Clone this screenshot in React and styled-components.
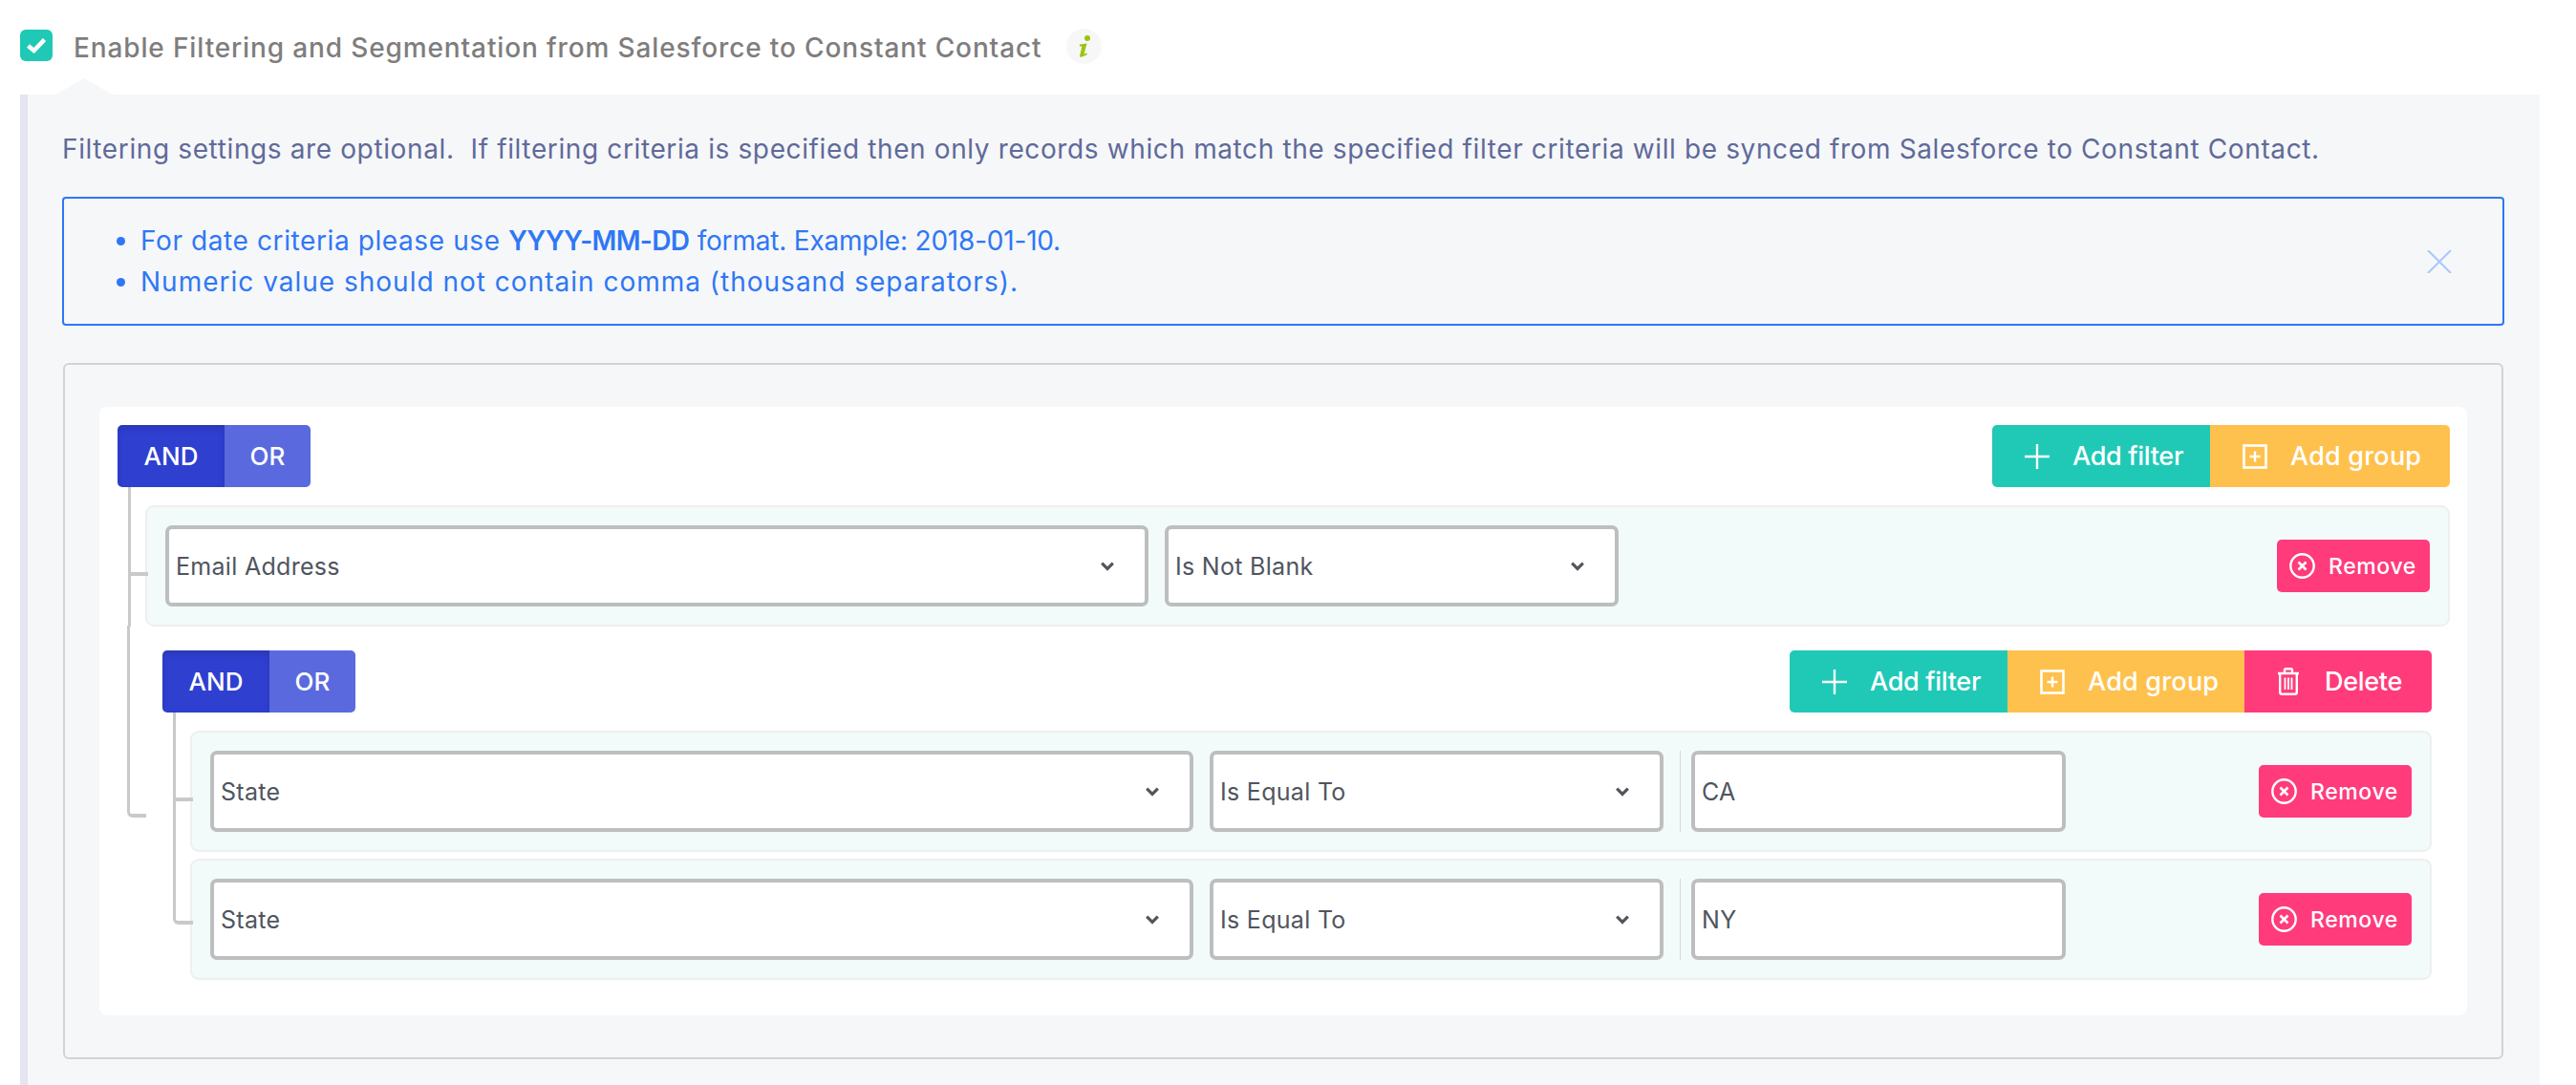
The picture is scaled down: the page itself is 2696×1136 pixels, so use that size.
import React from 'react'
import styled, { createGlobalStyle } from 'styled-components'

const GlobalStyle = createGlobalStyle`
  html, body { margin: 0; padding: 0; background: #fff; }
  body { font-family: Inter, "Noto Sans", sans-serif; }
  * { box-sizing: border-box; }
`
const Page = styled.div`
  width: 2696px;
  height: 1136px;
  overflow: hidden;
  display: flex;
  flex-direction: column;
`
const Heading = styled.div`
  height: 99px;
  padding: 31px 0 0 21px;
  display: flex;
  align-items: flex-start;
`
const Check = styled.span`
  width: 34px;
  height: 33px;
  border-radius: 6px;
  background: #1fc9b6;
  display: flex;
  align-items: center;
  justify-content: center;
`
const Title = styled.span`
  margin-left: 22px;
  height: 38px;
  line-height: 38px;
  font-size: 28px;
  font-weight: 500;
  letter-spacing: 0.87px;
  color: #7f7d7d;
  white-space: nowrap;
`
const Info = styled.span`
  width: 37px;
  height: 37px;
  margin: -1px 0 0 26px;
  border-radius: 50%;
  background: #f7f7f7;
  display: flex;
  align-items: center;
  justify-content: center;
`
const Panel = styled.div`
  position: relative;
  flex: 1;
  width: 2637px;
  margin-left: 21px;
  padding: 36px 37px 0 36px;
  background: #f6f7f9;
  border-left: 8px solid #e3e6f0;
  &::before {
    content: "";
    position: absolute;
    left: 29px;
    top: -17px;
    border-left: 30px solid transparent;
    border-right: 30px solid transparent;
    border-bottom: 17px solid #f6f7f9;
  }
`
const Intro = styled.p`
  margin: 0;
  line-height: 43px;
  font-size: 28px;
  letter-spacing: 0.62px;
  color: #5f6a9a;
  white-space: nowrap;
`
const Alert = styled.div`
  height: 135px;
  margin-top: 28px;
  border: 2px solid #2f77f5;
  border-radius: 4px;
  padding-right: 53px;
  display: flex;
  align-items: center;
  justify-content: space-between;
  color: #2f77f5;
`
const AlertList = styled.ul`
  margin: 0;
  padding: 0 0 0 80px;
  font-size: 28px;
  line-height: 43px;
  white-space: nowrap;
`
const AlertItem = styled.li`
  letter-spacing: ${(p) => p.$spacing}px;
  b { font-weight: 600; letter-spacing: -0.7px; }
`
const AlertTail = styled.span`
  letter-spacing: -0.2px;
`
const BuilderBox = styled.div`
  margin: 39px 1px 0;
  height: 729px;
  border: 2px solid #d0d3d8;
  border-radius: 6px;
  padding: 44px 36px 43px;
`
const RootGroup = styled.div`
  background: #fff;
  border-radius: 8px;
  padding: 19px 18px 37px 19px;
`
const NestedGroup = styled.div`
  position: relative;
  margin-top: 25px;
  padding: 0 19px 0 18px;
  &::before {
    content: "";
    position: absolute;
    left: -19px;
    top: -26px;
    width: 17px;
    height: 197px;
    border-left: 3px solid #c8c9cb;
    border-bottom: 4px solid #c8c9cb;
    border-bottom-left-radius: 6px;
  }
`
const GroupHeader = styled.div`
  height: 65px;
  display: flex;
  justify-content: space-between;
`
const ButtonRow = styled.div`
  display: flex;
  border-radius: 5px;
  overflow: hidden;
`
const ToggleButton = styled.span`
  width: ${(p) => p.$width}px;
  display: flex;
  align-items: center;
  justify-content: center;
  font-size: 26px;
  font-weight: 500;
  color: #fff;
  background: ${(p) => (p.$active ? '#2f3fd0' : '#5a6ade')};
  box-shadow: ${(p) => (p.$active ? 'inset 0 4px 6px rgba(0,0,0,.125)' : 'none')};
`
const ActionButton = styled.span`
  width: ${(p) => p.$width}px;
  padding-left: ${(p) => p.$pad}px;
  display: flex;
  align-items: center;
  gap: ${(p) => p.$gap}px;
  font-size: 27px;
  font-weight: 500;
  letter-spacing: ${(p) => p.$spacing || -0.3}px;
  color: #fff;
  white-space: nowrap;
  background: ${(p) => p.$bg};
`
const Rules = styled.div`
  margin-left: 29px;
`
const Rule = styled.div`
  position: relative;
  height: 127px;
  margin-top: ${(p) => p.$gap}px;
  padding: 19px;
  background: #f2fbfa;
  border: 2px solid #eeeff1;
  border-radius: 9px;
  display: flex;
  align-items: center;
  &::before {
    content: "";
    position: absolute;
    left: -20px;
    top: ${(p) => -(p.$gap + 2)}px;
    width: 18px;
    height: calc(50% + ${(p) => p.$gap + (p.$last ? 3 : 8)}px);
    border-left: 3px solid #c8c9cb;
    border-bottom: 4px solid #c8c9cb;
    border-bottom-left-radius: ${(p) => (p.$last ? 6 : 0)}px;
  }
  &::after {
    content: "";
    display: ${(p) => (p.$last ? 'none' : 'block')};
    position: absolute;
    left: -20px;
    top: 50%;
    bottom: -2px;
    border-left: 3px solid #c8c9cb;
  }
`
const Select = styled.div`
  width: ${(p) => p.$width}px;
  height: 85px;
  padding: 0 32px 0 7px;
  background: #fff;
  border: 4px solid #bdbebf;
  border-radius: 7px;
  display: flex;
  align-items: center;
  justify-content: space-between;
  font-size: 25px;
  letter-spacing: 0.3px;
  color: #50555f;
  margin-right: 17px;
`
const Divider = styled.span`
  width: 1px;
  height: 85px;
  margin-right: 11px;
  background: #d5d8dc;
`
const ValueBox = styled(Select)`
  margin-right: 0;
`
const RemoveButton = styled.span`
  width: 160px;
  height: 55px;
  margin-left: auto;
  padding-left: 13px;
  border-radius: 5px;
  background: #ff3b7b;
  display: flex;
  align-items: center;
  gap: 14px;
  font-size: 23px;
  font-weight: 500;
  letter-spacing: 0.6px;
  color: #fff;
`
const CloseIcon = () => (
  <svg width="26" height="24" viewBox="0 0 26 24" fill="none" stroke="#a9c7fb" strokeWidth="2">
    <path d="M1 0 25 24M25 0 1 24" />
  </svg>
)
const CheckIcon = () => (
  <svg width="20" height="16" viewBox="0 0 20 16" fill="none" stroke="#fff" strokeWidth="4.5">
    <path d="M1.5 8 7.5 13 18.5 1.5" />
  </svg>
)
const InfoIcon = () => (
  <svg width="16" height="26" viewBox="0 0 16 26" fill="#9cc40f">
    <circle cx="11" cy="4" r="3" />
    <path d="M3 10.5 10.5 9.5 7.6 20.5 11 19.5 10.4 21.5 4 24 3 22.5 5.4 12.5 2.8 12.5Z" />
  </svg>
)
const PlusIcon = () => (
  <svg width="26" height="26" viewBox="0 0 26 26" fill="none" stroke="#fff" strokeWidth="2.4">
    <path d="M13 0V26M0 13H26" />
  </svg>
)
const GroupIcon = () => (
  <svg width="26" height="26" viewBox="0 0 26 26" fill="none" stroke="#fff">
    <rect x="1.5" y="1.5" width="23" height="23" strokeWidth="2.6" />
    <path d="M13 7.5V18.5M7.5 13H18.5" strokeWidth="2.4" />
  </svg>
)
const TrashIcon = () => (
  <svg width="24" height="29" viewBox="0 0 24 29" fill="none" stroke="#fff" strokeWidth="2.4">
    <path d="M1 6H23M8 6V2.5Q8 1.2 9.5 1.2H14.5Q16 1.2 16 2.5V6" />
    <path d="M3.2 6V25.5Q3.2 27.8 5.5 27.8H18.5Q20.8 27.8 20.8 25.5V6" />
    <path d="M8.5 10.5V23M12 10.5V23M15.5 10.5V23" strokeWidth="1.9" />
  </svg>
)
const RemoveIcon = () => (
  <svg width="27" height="27" viewBox="0 0 27 27" fill="none" stroke="#fff">
    <circle cx="13.5" cy="13.5" r="12.2" strokeWidth="2.4" />
    <path d="M9.5 9.5 17.5 17.5M17.5 9.5 9.5 17.5" strokeWidth="2.6" />
  </svg>
)
const ChevronIcon = () => (
  <svg width="14" height="10" viewBox="0 0 14 10" fill="none" stroke="#53565c" strokeWidth="3.2">
    <path d="M1.2 1.6 7 7.4 12.8 1.6" />
  </svg>
)

const Toggle = () => (
  <ButtonRow>
    <ToggleButton $width={112} $active>AND</ToggleButton>
    <ToggleButton $width={90}>OR</ToggleButton>
  </ButtonRow>
)

const Actions = ({ canDelete }) => (
  <ButtonRow>
    <ActionButton $width={228} $pad={34} $gap={24} $bg="#1fc9b6"><PlusIcon />Add filter</ActionButton>
    <ActionButton $width={canDelete ? 248 : 251} $pad={34} $gap={24} $spacing={0.2} $bg="#ffc14d"><GroupIcon />Add group</ActionButton>
    {canDelete && <ActionButton $width={196} $pad={34} $gap={26} $bg="#ff3b7b"><TrashIcon />Delete</ActionButton>}
  </ButtonRow>
)

const FilterRule = ({ gap, last, field, op, value }) => (
  <Rule $gap={gap} $last={last}>
    <Select $width={1029}>{field}<ChevronIcon /></Select>
    <Select $width={475}>{op}<ChevronIcon /></Select>
    {value && <Divider />}
    {value && <ValueBox $width={392}>{value}</ValueBox>}
    <RemoveButton><RemoveIcon />Remove</RemoveButton>
  </Rule>
)

export default function App() {
  return (
    <Page>
      <GlobalStyle />
      <Heading>
        <Check><CheckIcon /></Check>
        <Title>Enable Filtering and Segmentation from Salesforce to Constant Contact</Title>
        <Info><InfoIcon /></Info>
      </Heading>
      <Panel>
        <Intro>Filtering settings are optional.&nbsp; If filtering criteria is specified then only records which match the specified filter criteria will be synced from Salesforce to Constant Contact.</Intro>
        <Alert>
          <AlertList>
            <AlertItem $spacing={0.6}>For date criteria please use <b>YYYY-MM-DD</b> <AlertTail>format. Example: 2018-01-10.</AlertTail></AlertItem>
            <AlertItem $spacing={1}>Numeric value should not contain comma (thousand separators).</AlertItem>
          </AlertList>
          <CloseIcon />
        </Alert>
        <BuilderBox>
          <RootGroup>
            <GroupHeader>
              <Toggle />
              <Actions />
            </GroupHeader>
            <Rules>
              <FilterRule gap={19} field="Email Address" op="Is Not Blank" />
              <NestedGroup>
                <GroupHeader>
                  <Toggle />
                  <Actions canDelete />
                </GroupHeader>
                <Rules>
                  <FilterRule gap={19} field="State" op="Is Equal To" value="CA" />
                  <FilterRule gap={7} last field="State" op="Is Equal To" value="NY" />
                </Rules>
              </NestedGroup>
            </Rules>
          </RootGroup>
        </BuilderBox>
      </Panel>
    </Page>
  )
}
